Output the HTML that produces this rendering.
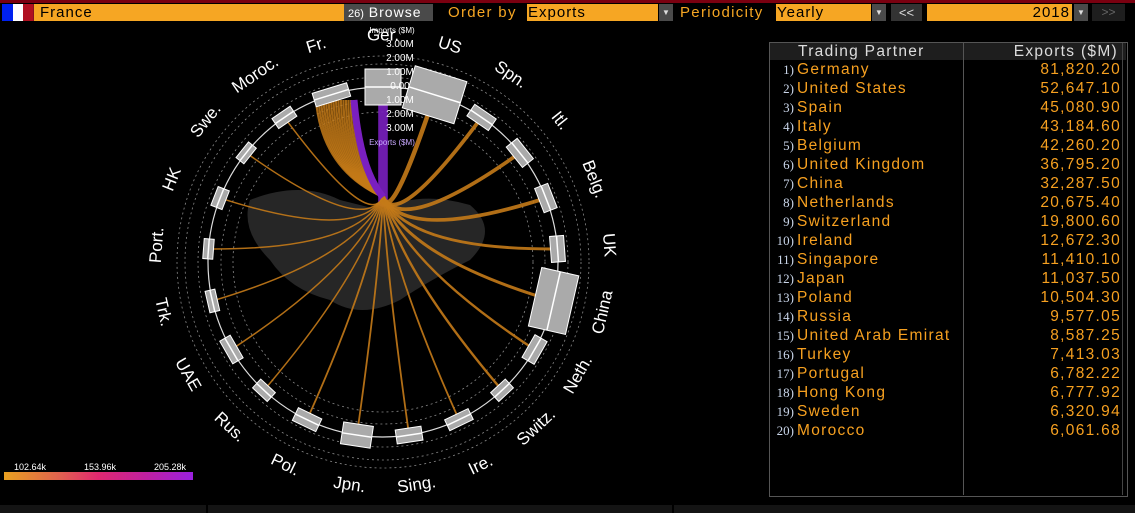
<!DOCTYPE html>
<html><head><meta charset="utf-8"><style>
body{margin:0;width:1135px;height:513px;background:#000;overflow:hidden;font-family:"Liberation Sans",sans-serif;position:relative}
.a{position:absolute}
.inp{background:#f6a623;color:#000;font-size:15px;line-height:17px;height:17px;top:4px;letter-spacing:1px}
.dd{background:#4a4a4a;top:4px;height:17px;width:14px;color:#ddd;font-size:8px;text-align:center;line-height:17px}
.t{color:#f6a623;font-size:15px;top:4px;line-height:17px;letter-spacing:1.3px}
.row{position:absolute;left:770px;width:356px;height:19px;font-size:15.5px;line-height:19px;letter-spacing:1.3px}
.row .n{position:absolute;left:0;width:24px;text-align:right;color:#c8d4e8;font-size:13px;letter-spacing:0;font-family:"Liberation Serif",serif}
.row .c{position:absolute;left:27px;color:#f6a020}
.row .v{position:absolute;right:5px;color:#f6a020}
</style></head><body>
<div class="a" style="left:0;top:0;width:1135px;height:3px;background:#7a0010"></div>
<div class="a" style="left:2px;top:4px;width:11px;height:17px;background:#0021f0"></div>
<div class="a" style="left:13px;top:4px;width:10px;height:17px;background:#fff"></div>
<div class="a" style="left:23px;top:4px;width:10px;height:17px;background:#b01020"></div>
<div class="a" style="left:33px;top:4px;width:5px;height:17px;background:#8a1020"></div>
<div class="a inp" style="left:34px;width:305px;padding-left:6px">France</div>
<div class="a" style="left:344px;top:4px;width:89px;height:17px;background:#4a4a4a;color:#fff;font-size:14px;line-height:17px;letter-spacing:1px"><span style="font-size:11px;margin-left:4px;letter-spacing:0">26)</span> Browse</div>
<div class="a t" style="left:448px">Order by</div>
<div class="a inp" style="left:527px;width:130px;padding-left:1px">Exports</div>
<div class="a dd" style="left:659px">▼</div>
<div class="a t" style="left:680px">Periodicity</div>
<div class="a inp" style="left:776px;width:94px;padding-left:1px">Yearly</div>
<div class="a dd" style="left:872px">▼</div>
<div class="a" style="left:891px;top:4px;width:31px;height:17px;background:#333;color:#ddd;font-size:13px;text-align:center;line-height:17px">&lt;&lt;</div>
<div class="a inp" style="left:927px;width:143px;text-align:right;padding-right:2px">2018</div>
<div class="a dd" style="left:1074px">▼</div>
<div class="a" style="left:1092px;top:4px;width:33px;height:17px;background:#1e1e1e;color:#666;font-size:12px;text-align:center;line-height:17px">&gt;&gt;</div>

<svg class="a" style="left:0;top:0" width="760" height="505" id="ch"></svg>

<div class="a" style="left:4px;top:472px;width:189px;height:8px;background:linear-gradient(90deg,#e8a020,#e06050 30%,#e02870 50%,#c020a0 75%,#9a20e0)"></div>
<div class="a" style="left:14px;top:462px;color:#fff;font-size:9px">102.64k</div>
<div class="a" style="left:84px;top:462px;color:#fff;font-size:9px">153.96k</div>
<div class="a" style="left:154px;top:462px;color:#fff;font-size:9px">205.28k</div>

<div class="a" style="left:769px;top:42px;width:357px;height:453px;border:1px solid #555"></div>
<div class="a" style="left:770px;top:43px;width:356px;height:17px;background:#1e1e1e"></div>
<div class="a" style="left:963px;top:43px;width:1px;height:452px;background:#555"></div>
<div class="a" style="left:1122px;top:43px;width:1px;height:452px;background:#444"></div>
<div class="a" style="left:798px;top:42px;color:#ddd;font-size:15.5px;line-height:19px;letter-spacing:1.3px">Trading Partner</div>
<div class="a" style="left:980px;top:42px;width:138px;text-align:right;color:#ddd;font-size:15.5px;line-height:19px;letter-spacing:1.3px">Exports ($M)</div>
<div id="tb"></div>
<div class="a" style="left:0;top:505px;width:1135px;height:8px;background:#141414"></div>
<div class="a" style="left:206px;top:505px;width:2px;height:8px;background:#000"></div>
<div class="a" style="left:672px;top:505px;width:2px;height:8px;background:#000"></div>
<script>
var D=[["Germany",81820.20],["United States",52647.10],["Spain",45080.90],["Italy",43184.60],["Belgium",42260.20],["United Kingdom",36795.20],["China",32287.50],["Netherlands",20675.40],["Switzerland",19800.60],["Ireland",12672.30],["Singapore",11410.10],["Japan",11037.50],["Poland",10504.30],["Russia","9,577.05"],["United Arab Emirat","8,587.25"],["Turkey","7,413.03"],["Portugal","6,782.22"],["Hong Kong","6,777.92"],["Sweden","6,320.94"],["Morocco","6,061.68"]];
var h="";
D.forEach(function(d,i){var v=typeof d[1]=="number"?d[1].toLocaleString("en-US",{minimumFractionDigits:2}):d[1];
h+='<div class="row" style="top:'+(60+i*19)+'px"><span class="n">'+(i+1)+')</span><span class="c">'+d[0]+'</span><span class="v">'+v+'</span></div>';});
document.getElementById("tb").innerHTML=h;
var L=["Ger.","US","Spn.","Itl.","Belg.","UK","China","Neth.","Switz.","Ire.","Sing.","Jpn.","Pol.","Rus.","UAE","Trk.","Port.","HK","Swe.","Moroc.","Fr."];
var W=[8,3,2.5,2.5,2.5,2,2,1.6,1.6,1.2,1.2,1.2,1.2,1,1,1,1,1,1,1];
var BS=[[36,36],[44,54],[14,26],[14,26],[14,26],[14,26],[38,60],[14,26],[12,20],[12,26],[14,26],[22,30],[14,26],[12,20],[12,26],[10,22],[10,20],[12,20],[10,20],[12,22],[14,36]];
var cx=383,cy=262,R=175,hx=383,hy=197,s="";
s+='<path d="M250 200 Q300 180 340 200 L380 210 Q420 190 470 205 Q500 230 470 260 Q430 280 400 300 Q360 320 330 300 Q290 290 270 260 Q240 230 250 200Z" fill="#262626"/>';
[150,162,185,198,206].forEach(function(r){s+='<circle cx="'+cx+'" cy="'+cy+'" r="'+r+'" fill="none" stroke="#888" stroke-width="0.8" stroke-dasharray="2 3"/>';});
s+='<circle cx="'+cx+'" cy="'+cy+'" r="'+R+'" fill="none" stroke="#ddd" stroke-width="1.2"/>';
for(var i=0;i<21;i++){var a=i*360/21*Math.PI/180,x=cx+R*Math.sin(a),y=cy-R*Math.cos(a);
 if(i<20){var col=i==0?"#7a1fc0":"#c47a18",w=W[i]*(i==0?1.2:1.5);
  s+='<path d="M'+x+' '+y+' Q'+(cx+(x-cx)*0.15)+' '+(cy-10+(y-cy)*0.15)+' '+hx+' '+hy+'" fill="none" stroke="'+col+'" stroke-width="'+w+'" opacity="0.9"/>';}
}
for(var k=0;k<16;k++){s+='<path d="M'+(316+k*2.5)+' 100 Q'+(322+k*2)+' 170 '+hx+' '+hy+'" fill="none" stroke="#c47a18" stroke-width="2.2" opacity="0.85"/>';}
s+='<path d="M354 100 Q360 170 '+hx+' '+hy+'" fill="none" stroke="#7a1fc0" stroke-width="7"/>';
for(var i=0;i<21;i++){var deg=i*360/21,a=deg*Math.PI/180,x=cx+R*Math.sin(a),y=cy-R*Math.cos(a),b=BS[i];
 s+='<g transform="translate('+x+' '+y+') rotate('+deg+')"><rect x="'+(-b[1]/2)+'" y="'+(-b[0]/2)+'" width="'+b[1]+'" height="'+b[0]+'" fill="#aaa" stroke="#fff" stroke-width="1"/><line x1="'+(-b[1]/2)+'" x2="'+(b[1]/2)+'" y1="0" y2="0" stroke="#fff" stroke-width="1.5"/></g>';
 var lr=226,lx=cx+lr*Math.sin(a),ly=cy-lr*Math.cos(a);
 var r2; if(deg<90) r2=deg; else if(deg<270) r2=deg-180; else r2=deg-360;
 s+='<text x="'+lx+'" y="'+ly+'" fill="#fff" font-size="17" text-anchor="middle" dominant-baseline="middle" transform="rotate('+r2+' '+lx+' '+ly+')">'+L[i]+'</text>';}
var ax=["Imports ($M)","3.00M","2.00M","1.00M","0.00","1.00M","2.00M","3.00M","Exports ($M)"];
ax.forEach(function(t,j){s+='<text x="'+(j==0||j==8?392:400)+'" y="'+(33+j*14)+'" fill="'+(j==8?"#c8a8ff":"#fff")+'" font-size="'+(j==0||j==8?8:10)+'" text-anchor="middle">'+t+'</text>';});
document.getElementById("ch").innerHTML=s;
</script>
</body></html>
